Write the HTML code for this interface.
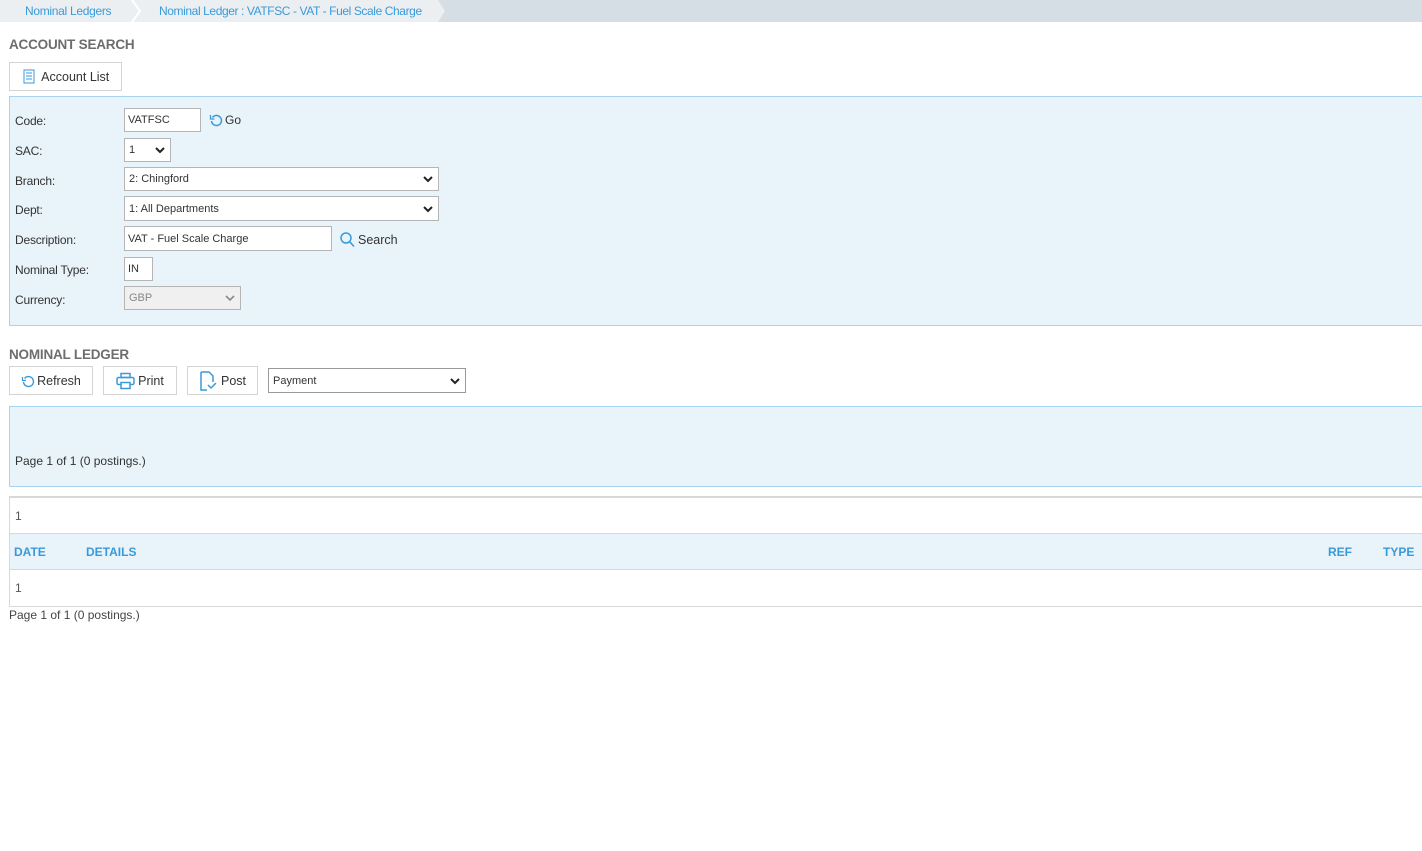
<!DOCTYPE html>
<html><head><style>
*{box-sizing:border-box;margin:0;padding:0}
body{width:1422px;height:851px;background:#fff;font-family:"Liberation Sans",sans-serif;color:#333;position:relative;overflow:hidden;font-size:12px}
.a{position:absolute}
.lbl{position:absolute;left:15px;font-size:12px;color:#333;letter-spacing:-0.2px}
.inp{position:absolute;border:1px solid #b5b5b5;background:#fff;font-size:11px;padding-left:3px;display:flex;align-items:center;color:#333}
.sel{padding-left:4px}
.sel svg{position:absolute;right:5px;top:50%;margin-top:-4px}
.btn{position:absolute;border:1px solid #d4d4d4;background:#fff;font-size:12.5px;display:flex;align-items:center;justify-content:center;color:#333;gap:2px}
h2{position:absolute;left:9px;font-size:13.5px;font-weight:bold;color:#6d6d6d;letter-spacing:-0.2px}
.th{position:absolute;top:545px;font-size:12px;font-weight:bold;color:#3a9ad9}
</style></head><body>
<div class="a" style="left:0;top:0;width:1422px;height:22px;background:#d5dee4"></div>
<div class="a" style="left:0;top:0;width:445px;height:22px;background:#eceff1;clip-path:polygon(0 0,438px 0,445px 11px,438px 22px,0 22px)"></div>
<svg class="a" style="left:130px;top:0" width="14" height="22"><path d="M2 0 L10 11 L2 22" stroke="#fff" stroke-width="2" fill="none"/></svg>
<div class="a" style="left:25px;top:4px;font-size:12px;color:#3a9ad9;letter-spacing:-0.3px">Nominal Ledgers</div>
<div class="a" style="left:159px;top:4px;font-size:12px;color:#3a9ad9;letter-spacing:-0.4px">Nominal Ledger : VATFSC - VAT - Fuel Scale Charge</div>

<h2 style="top:37px">ACCOUNT SEARCH</h2>
<div class="btn" style="left:9px;top:62px;width:113px;height:29px"><svg width="14" height="15"><rect x="2" y="1" width="10" height="13" fill="none" stroke="#3a9ad9"/><path d="M4 4h6M4 7h6M4 10h6" stroke="#3a9ad9"/></svg>&nbsp;Account List</div>

<div class="a" style="left:9px;top:96px;width:1413px;height:230px;background:#e8f3fa;border:1px solid #a8d4f0;border-right:none"></div>
<div class="lbl" style="top:114px">Code:</div>
<div class="lbl" style="top:144px">SAC:</div>
<div class="lbl" style="top:174px">Branch:</div>
<div class="lbl" style="top:203px">Dept:</div>
<div class="lbl" style="top:233px">Description:</div>
<div class="lbl" style="top:263px">Nominal Type:</div>
<div class="lbl" style="top:293px">Currency:</div>
<div class="inp" style="left:124px;top:108px;width:77px;height:24px">VATFSC</div>
<div class="a" style="left:209px;top:113px;font-size:12px;display:flex;align-items:center;gap:2px"><svg width="14" height="14"><path d="M3.5 4.5 A5 5 0 1 1 2.5 8" stroke="#3a9ad9" stroke-width="1.5" fill="none"/><path d="M1.5 2v4h4" stroke="#3a9ad9" stroke-width="1.3" fill="none"/></svg>Go</div>
<div class="inp sel" style="left:124px;top:138px;width:47px;height:24px">1<svg width="10" height="8"><path d="M1 2l4 4 4-4" stroke="#222" stroke-width="2" fill="none"/></svg></div>
<div class="inp sel" style="left:124px;top:167px;width:315px;height:24px">2: Chingford<svg width="10" height="8"><path d="M1 2l4 4 4-4" stroke="#222" stroke-width="2" fill="none"/></svg></div>
<div class="inp sel" style="left:124px;top:196px;width:315px;height:25px">1: All Departments<svg width="10" height="8"><path d="M1 2l4 4 4-4" stroke="#222" stroke-width="2" fill="none"/></svg></div>
<div class="inp" style="left:124px;top:226px;width:208px;height:25px">VAT - Fuel Scale Charge</div>
<div class="a" style="left:340px;top:232px;font-size:12.5px;display:flex;align-items:center;gap:3px"><svg width="15" height="16"><circle cx="6" cy="6" r="5" stroke="#3a9ad9" stroke-width="1.5" fill="none"/><path d="M9.5 9.5l4.5 5" stroke="#3a9ad9" stroke-width="1.6"/></svg>Search</div>
<div class="inp" style="left:124px;top:257px;width:29px;height:24px">IN</div>
<div class="inp sel" style="left:124px;top:286px;width:117px;height:24px;background:#f0f0f0;color:#888">GBP<svg width="10" height="8"><path d="M1 2l4 4 4-4" stroke="#888" stroke-width="1.6" fill="none"/></svg></div>

<h2 style="top:347px">NOMINAL LEDGER</h2>
<div class="btn" style="left:9px;top:366px;width:84px;height:29px"><svg width="14" height="14"><path d="M3.5 4.5 A5 5 0 1 1 2.5 8" stroke="#3a9ad9" stroke-width="1.4" fill="none"/><path d="M1.5 3v3.5h3.5" stroke="#3a9ad9" stroke-width="1.2" fill="none"/></svg>Refresh</div>
<div class="btn" style="left:103px;top:366px;width:74px;height:29px"><svg width="20" height="18"><rect x="5" y="1.5" width="9" height="4" fill="none" stroke="#3a9ad9" stroke-width="1.5"/><rect x="1" y="5.5" width="17" height="7" rx="1.5" fill="none" stroke="#3a9ad9" stroke-width="1.5"/><rect x="5" y="10.5" width="9" height="6" fill="#fff" stroke="#3a9ad9" stroke-width="1.5"/></svg>Print</div>
<div class="btn" style="left:187px;top:366px;width:71px;height:29px;gap:4px"><svg width="18" height="20"><path d="M2 1h8l4 4v6M2 1v18h6" fill="none" stroke="#3a9ad9" stroke-width="1.5"/><path d="M9 14l3 3 5-5" fill="none" stroke="#3a9ad9" stroke-width="1.5"/></svg>Post</div>
<div class="inp sel" style="left:268px;top:368px;width:198px;height:25px;border-color:#999">Payment<svg width="10" height="8"><path d="M1 2l4 4 4-4" stroke="#222" stroke-width="2" fill="none"/></svg></div>

<div class="a" style="left:9px;top:406px;width:1413px;height:81px;background:#e8f3fa;border:1px solid #a8d4f0;border-right:none"></div>
<div class="a" style="left:15px;top:454px;font-size:12px">Page 1 of 1 (0 postings.)</div>

<div class="a" style="left:9px;top:496px;width:1413px;height:111px;border:1px solid #d8d8d8;border-top:2px solid #d8d8d8;border-right:none"></div>
<div class="a" style="left:10px;top:533px;width:1412px;height:37px;background:#e8f3fa;border-top:1px solid #d8d8d8;border-bottom:1px solid #d8d8d8"></div>
<div class="a" style="left:15px;top:509px;font-size:12px;color:#555">1</div>
<div class="th" style="left:14px">DATE</div>
<div class="th" style="left:86px">DETAILS</div>
<div class="th" style="left:1328px">REF</div>
<div class="th" style="left:1383px">TYPE</div>
<div class="a" style="left:15px;top:581px;font-size:12px;color:#555">1</div>
<div class="a" style="left:9px;top:608px;font-size:12px;color:#444">Page 1 of 1 (0 postings.)</div>
</body></html>
